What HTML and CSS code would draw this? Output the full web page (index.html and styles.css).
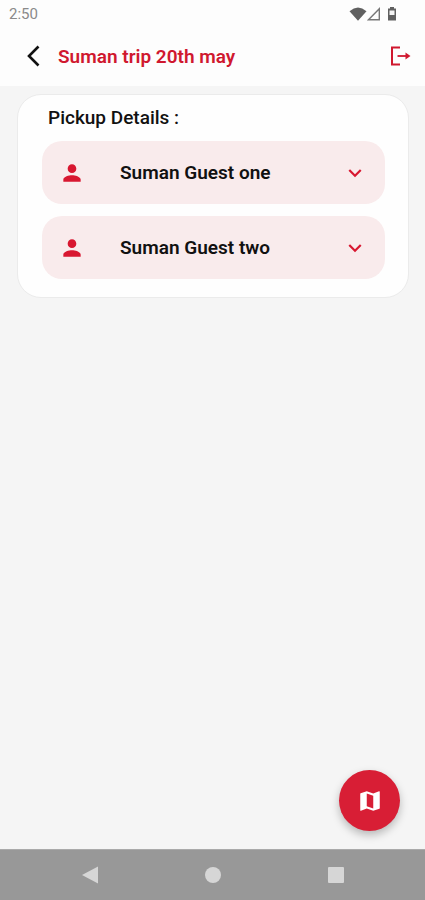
FILE: index.html
```html
<!DOCTYPE html>
<html lang="en">
  <head>
    <meta charset="UTF-8" />
    <meta name="viewport" content="width=device-width, initial-scale=1.0" />
    <title>Suman trip 20th may</title>
    <link rel="stylesheet" href="styles.css">
  </head>

  <body>
    <div class="status-bar">
      <span class="time">2:50</span>
      <div class="status-icons">
        <svg width="18" height="14" viewBox="0 0 18 14">
          <path d="M0.500 4.200Q9-3 17.500 4.200L9 13.800Z" fill="#606060" />
        </svg>
        <svg width="14" height="14" viewBox="0 0 14 14">
          <path d="M12.300 1.800V12.800H1.500Z" fill="none" stroke="#777" stroke-width="1.400" />
        </svg>
        <svg width="10" height="14" viewBox="0 0 10 14">
          <path d="M3 0H7V1.500H9V13.500H1V1.500H3Z" fill="#606060" />
          <path d="M2.500 3.500H7.500V8H2.500Z" fill="#f4f4f4" />
        </svg>
      </div>
    </div>

    <header class="app-bar">
      <button class="icon-btn" aria-label="Back">
        <svg width="24" height="24" viewBox="0 0 24 24">
          <path d="M16.500 2.500L7 12L16.500 21.500" fill="none" stroke="#111" stroke-width="2.600" />
        </svg>
      </button>
      <h1 class="title">Suman trip 20th may</h1>
      <button class="icon-btn" aria-label="Exit trip">
        <svg width="24" height="24" viewBox="0 0 24 24">
          <path d="M12 3.500H4V20.500H12" fill="none" stroke="#d0182f" stroke-width="2" />
          <path d="M9.500 12H18" stroke="#d0182f" stroke-width="1.800" />
          <path d="M17.500 8.500L22.500 12L17.500 15.500Z" fill="#d0182f" />
        </svg>
      </button>
    </header>

    <main class="content">
      <section class="card">
        <h2 class="card-title">Pickup Details :</h2>
        <button class="guest" aria-expanded="false">
          <svg width="26" height="26" viewBox="0 0 24 24">
            <path d="M12 12c2.210 0 4-1.790 4-4s-1.790-4-4-4-4 1.790-4 4 1.790 4 4 4zm0 2c-2.670 0-8 1.340-8 4v2h16v-2c0-2.660-5.330-4-8-4z" fill="#d81730" />
          </svg>
          <span class="guest-name">Suman Guest one</span>
          <svg width="26" height="26" viewBox="0 0 24 24">
            <path d="M16.590 8.590L12 13.170 7.410 8.590 6 10l6 6 6-6z" fill="#d81730" />
          </svg>
        </button>
        <button class="guest" aria-expanded="false">
          <svg width="26" height="26" viewBox="0 0 24 24">
            <path d="M12 12c2.210 0 4-1.790 4-4s-1.790-4-4-4-4 1.790-4 4 1.790 4 4 4zm0 2c-2.670 0-8 1.340-8 4v2h16v-2c0-2.660-5.330-4-8-4z" fill="#d81730" />
          </svg>
          <span class="guest-name">Suman Guest two</span>
          <svg width="26" height="26" viewBox="0 0 24 24">
            <path d="M16.590 8.590L12 13.170 7.410 8.590 6 10l6 6 6-6z" fill="#d81730" />
          </svg>
        </button>
      </section>

      <button class="map-btn" aria-label="Open map">
        <svg width="26" height="26" viewBox="0 0 24 24">
          <path d="M20.500 3l-.160.030L15 5.100 9 3 3.360 4.900c-.210.070-.360.250-.360.480V20.500c0 .280.220.500.500.500l.160-.030L9 18.900l6 2.100 5.640-1.900c.210-.070.360-.250.360-.480V3.500c0-.280-.220-.500-.500-.500zM15 19l-6-2.110V5l6 2.110V19z" fill="#fff" />
        </svg>
      </button>
    </main>

    <nav class="nav-bar">
      <button class="nav-btn" aria-label="Back">
        <svg width="18" height="18" viewBox="0 0 18 18">
          <path d="M17 0.500V17.500L1 9Z" fill="#d6d6d6" />
        </svg>
      </button>
      <button class="nav-btn" aria-label="Home">
        <svg width="18" height="18" viewBox="0 0 18 18">
          <circle cx="9" cy="9" r="8" fill="#d6d6d6" />
        </svg>
      </button>
      <button class="nav-btn" aria-label="Recent apps">
        <svg width="18" height="18" viewBox="0 0 18 18">
          <rect x="1" y="1" width="16" height="16" rx="1" fill="#d6d6d6" />
        </svg>
      </button>
    </nav>
  </body>
</html>
```

FILE: styles.css
```css
* {
  box-sizing: border-box;
}

body {
  display: flex;
  flex-direction: column;
  min-height: 100vh;
  margin: 0;
  background-color: #f5f5f5;
  font-family: Roboto, Arial, sans-serif;
}

button {
  padding: 0;
  border: none;
  background: none;
  font-family: inherit;
  cursor: pointer;
}

svg {
  display: block;
  flex-shrink: 0;
}

.status-bar {
  display: flex;
  justify-content: space-between;
  align-items: center;
  height: 28px;
  padding: 0 28px 0 9px;
  background-color: #fdfdfd;
}

.time {
  color: #8a8a8a;
  font-size: 15px;
}

.status-icons {
  display: flex;
}

.status-icons svg:last-child {
  margin-left: 6px;
}

.app-bar {
  display: flex;
  align-items: center;
  height: 58px;
  padding: 0 13px 2px 22px;
  background-color: #fdfdfd;
}

.title {
  flex: 1;
  margin: 0 12px;
  color: #d0182f;
  font-size: 19px;
  font-weight: 600;
}

.content {
  display: flex;
  flex: 1;
  flex-direction: column;
  padding: 8px 16px 18px 17px;
}

.card {
  display: flex;
  flex-direction: column;
  gap: 12px;
  padding: 12px 23px 18px 24px;
  border: 1px solid #ebebeb;
  border-radius: 24px;
  background-color: #fefefe;
}

.card-title {
  margin: 0 6px;
  color: #111;
  font-size: 19px;
  font-weight: 500;
  line-height: 22px;
}

.guest {
  display: flex;
  align-items: center;
  height: 63px;
  padding: 0 17px;
  border-radius: 20px;
  background-color: #f9ebec;
}

.guest-name {
  flex: 1;
  margin-left: 35px;
  color: #111;
  font-size: 19px;
  font-weight: 600;
  text-align: left;
}

.map-btn {
  display: flex;
  justify-content: center;
  align-items: center;
  align-self: flex-end;
  width: 61px;
  height: 61px;
  margin: auto 9px 0 0;
  border-radius: 50%;
  background-color: #d81e35;
  box-shadow: 0 4px 8px rgba(0, 0, 0, 0.25);
}

.nav-bar {
  display: flex;
  justify-content: center;
  align-items: center;
  height: 51px;
  gap: 105px;
  border-top: 1px solid #aaa;
  background-color: #989898;
}
```
